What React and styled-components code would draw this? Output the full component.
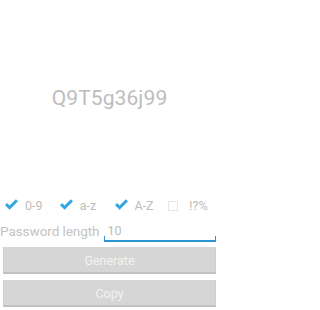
import React from "react";
import styled, { createGlobalStyle } from "styled-components";

const Global = createGlobalStyle`
  html, body { margin: 0; padding: 0; background: #ffffff; }
  body { font-family: Roboto, "Noto Sans", "Liberation Sans", sans-serif; }
  * { box-sizing: border-box; }
`;

const Screen = styled.div`
  width: 219px;
  height: 310px;
  display: flex;
  flex-direction: column;
  background: #ffffff;
  padding-bottom: 3px;
`;

const TitleArea = styled.div`
  flex: 1;
  display: flex;
  align-items: center;
  justify-content: center;
`;

const Password = styled.div`
  font-size: 21px;
  color: #bdbdbd;
  letter-spacing: 0.1px;
  margin-top: 2px;
`;

const OptionsRow = styled.div`
  height: 22px;
  display: flex;
  align-items: center;
`;

const Option = styled.label`
  flex: 1;
  display: flex;
  align-items: center;
  height: 100%;
  padding-left: 3px;
`;

const IconBox = styled.span`
  width: 22px;
  height: 14px;
  display: flex;
  align-items: center;
  justify-content: flex-start;
  flex-shrink: 0;
`;

const EmptyBox = styled.span`
  width: 10px;
  height: 10px;
  margin-left: 1px;
  margin-top: 3px;
  border: 1px solid #e6e6e6;
`;

const CheckMark = styled.svg`
  margin-left: 2px;
  display: block;
`;

const OptionLabel = styled.span`
  font-size: 12.5px;
  color: #bdbdbd;
  margin-top: 2px;
`;

const LengthRow = styled.div`
  height: 30px;
  display: flex;
  align-items: flex-end;
  padding-right: 3px;
`;

const LengthLabel = styled.span`
  font-size: 13.6px;
  letter-spacing: -0.1px;
  color: #c4c4c4;
  line-height: 16px;
  margin-bottom: 6px;
  white-space: nowrap;
`;

const Field = styled.div`
  position: relative;
  flex: 1;
  margin-left: 4px;
  height: 22px;
  margin-bottom: 3px;
  border-bottom: 2px solid #2b95d6;
  display: flex;
  align-items: center;
  padding-left: 4px;
  padding-top: 1px;
  font-size: 12.5px;
  color: #bcbcbc;

  &::before, &::after {
    content: "";
    position: absolute;
    bottom: 0;
    width: 1.5px;
    height: 4px;
    background: #2b95d6;
  }
  &::before { left: 0; }
  &::after { right: 0; }
`;

const ButtonStack = styled.div`
  display: flex;
  flex-direction: column;
  gap: 6px;
  padding: 2px 3px 0;
`;

const Button = styled.button`
  height: 27px;
  width: 100%;
  border: none;
  border-bottom: 2px solid #c2c2c2;
  background: #d6d6d6;
  color: #f3f3f3;
  font-family: Roboto, "Noto Sans", sans-serif;
  font-size: 12.5px;
  padding: 0;
  padding-top: 1px;
  box-shadow: inset 1px 0 0 #d0d0d0, inset -1px 0 0 #d0d0d0;
`;

const Check = () => (
  <CheckMark width="13" height="11" viewBox="0 0 13 11">
    <polyline
      points="1,5.2 4.6,8.6 12,1.2"
      fill="none"
      stroke="#33a8e0"
      strokeWidth="3"
      strokeLinejoin="miter"
    />
  </CheckMark>
);

const options = [
  { label: "0-9", checked: true },
  { label: "a-z", checked: true },
  { label: "A-Z", checked: true },
  { label: "!?%", checked: false },
];

export default function App() {
  return (
    <>
      <Global />
      <Screen>
        <TitleArea>
          <Password>Q9T5g36j99</Password>
        </TitleArea>
        <OptionsRow>
          {options.map((o) => (
            <Option key={o.label}>
              <IconBox>{o.checked ? <Check /> : <EmptyBox />}</IconBox>
              <OptionLabel>{o.label}</OptionLabel>
            </Option>
          ))}
        </OptionsRow>
        <LengthRow>
          <LengthLabel>Password length</LengthLabel>
          <Field>10</Field>
        </LengthRow>
        <ButtonStack>
          <Button>Generate</Button>
          <Button>Copy</Button>
        </ButtonStack>
      </Screen>
    </>
  );
}
